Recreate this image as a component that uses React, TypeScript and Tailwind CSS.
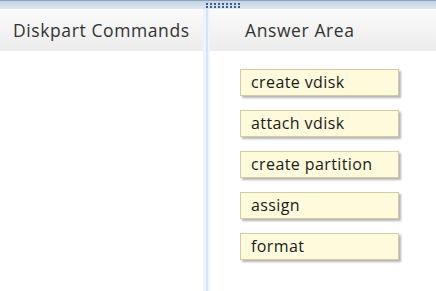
const answers = ["create vdisk", "attach vdisk", "create partition", "assign", "format"];

const Handle = () => (
    <div className="grid grid-cols-[repeat(9,2px)] gap-x-[2px] gap-y-[1px]">
        {Array.from({ length: 18 }).map((_, i) => (
            <div key={i} className="w-[2px] h-[2px] bg-[#3b5f8a]"></div>
        ))}
    </div>
);

export default function App() {
    return (
        <div className="w-[436px] h-[291px] bg-white flex flex-col overflow-hidden font-['Open_Sans',sans-serif]">
            <div className="h-[9px] flex-shrink-0 flex justify-center items-center border-t border-[#8fa4bb] bg-gradient-to-b from-[#c4d3e3] to-[#dde7f1]">
                <div className="ml-[10px]">
                    <Handle />
                </div>
            </div>
            <div className="flex flex-1">
                <div className="w-[203px] flex flex-col">
                    <div className="h-[42px] flex items-center pl-[13px] bg-gradient-to-b from-[#fbfbfb] to-[#ececec] text-[17.5px] tracking-[0.6px] text-[#333]">
                        Diskpart Commands
                    </div>
                </div>
                <div className="w-[7px] flex">
                    <div className="w-[3px] bg-[#eef4fa]"></div>
                    <div className="w-[2px] bg-[#d6e5f3]"></div>
                    <div className="w-[2px] bg-[#eef4fa]"></div>
                </div>
                <div className="flex-1 flex flex-col">
                    <div className="h-[42px] flex items-center pl-[35px] bg-gradient-to-b from-[#fbfbfb] to-[#ececec] text-[17.5px] tracking-[0.6px] text-[#333]">
                        Answer Area
                    </div>
                    <div className="flex flex-col gap-[14px] pl-[30px] pt-[18px]">
                        {answers.map((a) => (
                            <div
                                key={a}
                                className="w-[159px] h-[27px] flex items-center pl-[10px] pb-[2px] bg-[#fffadc] border border-[#d4cba3] shadow-[2px_2px_2px_#b5b5b5] text-[16px] tracking-[0.4px] text-[#1a1a1a]"
                            >
                                {a}
                            </div>
                        ))}
                    </div>
                </div>
            </div>
        </div>
    );
}
